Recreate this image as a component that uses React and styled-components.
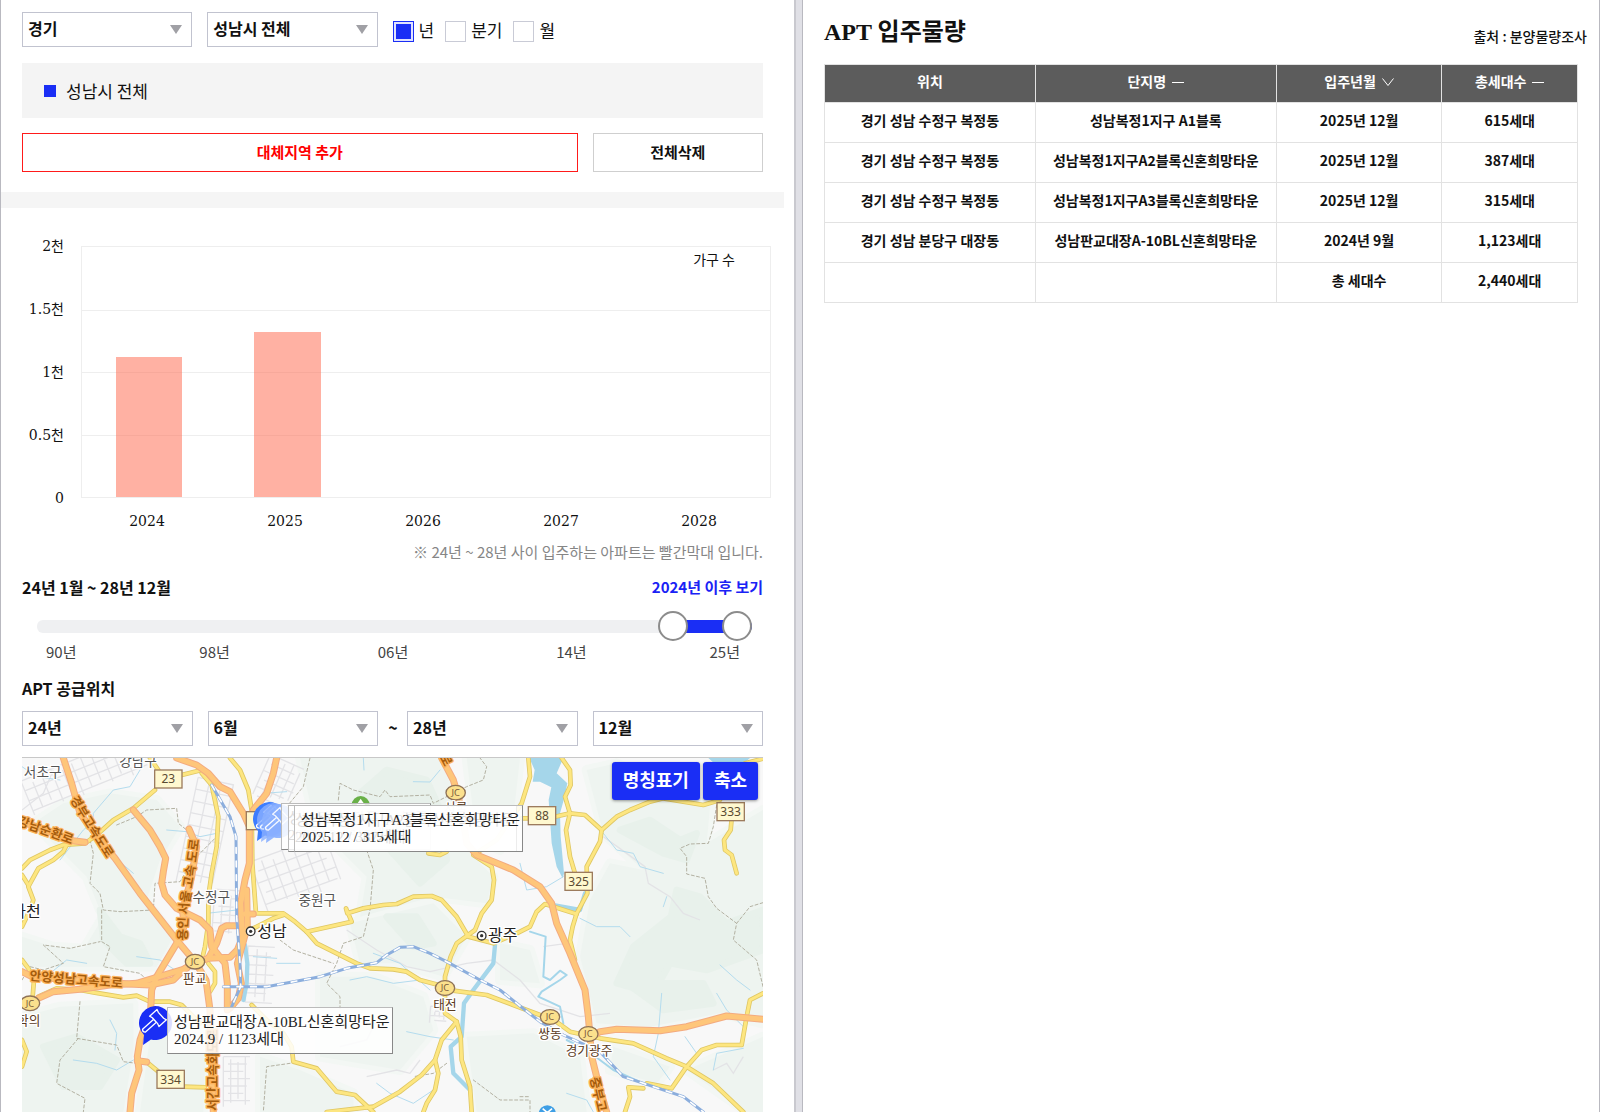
import React, { useState } from "react";
import styled, { createGlobalStyle, css } from 'styled-components';


const SANS = '"Noto Sans CJK KR", sans-serif';
const SERIF = '"Liberation Serif", "Noto Sans CJK KR", serif';

const GlobalStyle = createGlobalStyle`
  * {
    box-sizing: border-box;
  }
  body {
    margin: 0;
    background-color: #ffffff;
    color: #111111;
    font-family: ${SANS};
  }
  button, select, input {
    margin: 0;
    font-family: inherit;
    color: inherit;
  }
`;

const Page = styled.div`
  display: grid;
  grid-template-columns: calc(50% - 6px) 9px 1fr;
  min-height: 100vh;
`;

const LeftPanel = styled.main`
  display: flex;
  flex-direction: column;
  min-width: 0;
  border-left: 1px solid #b9b9c0;
`;

const Splitter = styled.div`
  background-color: #e0e0e6;
  border-left: 2px solid #c9c9cf;
  border-right: 1px solid #b9b9c0;
`;

const RightPanel = styled.section`
  min-width: 0;
  padding: 14px 21px 0 21px;
  border-right: 1px solid #b9b9c0;
`;

const Section = styled.section`
  padding: 0 31px 0 21px;
`;

const Filters = styled(Section)`
  padding-top: 12px;
`;

const MapSection = styled(Section)`
  display: flex;
  flex-direction: column;
  flex: 1;
`;

const Row = styled.div`
  display: flex;
  align-items: center;
`;

const FilterRow = styled.div`
  display: grid;
  grid-template-columns: 25% 25% 1fr;
  align-items: center;
`;

const SelectBox = styled.div`
  position: relative;
  flex: 1 1 0;
  min-width: 0;
  margin-right: ${p => (p.$last ? 0 : 15)}px;
  &::after {
    content: "";
    position: absolute;
    right: 10px;
    top: 13px;
    border: 6px solid transparent;
    border-top: 9px solid #a0a0a5;
    border-bottom: 0;
    pointer-events: none;
  }
`;

const Select = styled.select`
  appearance: none;
  display: block;
  width: 100%;
  height: 35px;
  padding: 0 24px 3px 5px;
  border: 1px solid #c1c3cf;
  border-radius: 0;
  background-color: #ffffff;
  font-size: 16px;
  font-weight: 700;
`;

const Tilde = styled.span`
  flex: 0 0 14px;
  margin-left: -7px;
  margin-right: 7px;
  padding-bottom: 3px;
  text-align: center;
  font-size: 16px;
  font-weight: 700;
`;

const Periods = styled.div`
  display: flex;
  align-items: center;
  gap: 11px;
`;

const PeriodLabel = styled.label`
  display: flex;
  align-items: flex-end;
  gap: 5px;
  font-size: 17px;
  line-height: 24px;
`;

const Check = styled.input`
  appearance: none;
  width: 21px;
  height: 21px;
  border: 1px solid #c9cbd6;
  background-color: #ffffff;
  &:checked {
    border-color: #1a2ef5;
    background-color: #1a2ef5;
    box-shadow: inset 0 0 0 2px #e0e3ff;
  }
`;

const Selected = styled.div`
  display: flex;
  align-items: center;
  gap: 10px;
  height: 55px;
  margin: 16px 0 15px;
  padding: 0 22px;
  background-color: #f4f4f4;
  font-size: 17px;
  &::before {
    content: "";
    width: 12px;
    height: 12px;
    background-color: #1a2ef5;
  }
`;

const OutlineButton = styled.button`
  flex: ${p => (p.$wide ? '1 1 0' : '0 0 23%')};
  height: 39px;
  margin-right: ${p => (p.$wide ? 15 : 0)}px;
  padding: 0 0 3px;
  border: 1px solid ${p => (p.$wide ? '#ff1a1a' : '#cfcfcf')};
  background-color: #ffffff;
  color: ${p => (p.$wide ? '#ff0000' : '#111111')};
  font-size: 15px;
  font-weight: 700;
`;

const Band = styled.div`
  flex: none;
  height: 16px;
  margin: 20px 10px 28px 0;
  background-color: #f5f5f5;
`;

const ChartWrap = styled.section`
  display: grid;
  grid-template-columns: 42px 1fr;
  column-gap: 17px;
  padding: 0 23px 0 21px;
`;

const YAxis = styled.div`
  display: flex;
  flex-direction: column;
  justify-content: space-between;
  text-align: right;
  font: 14px/20px "DejaVu Serif", "Noto Sans CJK KR", serif;
`;

const Plot = styled.div`
  position: relative;
  height: 252px;
  margin: 10px 0;
  border: 1px solid #eeeeee;
`;

const GridLines = styled.div`
  display: grid;
  grid-template-rows: repeat(4, 1fr);
  height: 100%;
`;

const GridLine = styled.div`
  border-top: 1px solid #eeeeee;
  &:first-child {
    border-top: 0;
  }
`;

const Bars = styled.div`
  position: absolute;
  inset: 0 -2px 0 -2px;
  display: grid;
  grid-template-columns: repeat(5, 1fr);
  align-items: end;
  justify-items: center;
`;

const Bar = styled.div`
  width: 48%;
  background-color: rgba(255, 99, 71, 0.5);
`;

const Legend = styled.span`
  position: absolute;
  top: 2px;
  right: 35px;
  font-size: 14px;
  line-height: 20px;
`;

const XAxis = styled.div`
  grid-column: 2;
  display: grid;
  grid-template-columns: repeat(5, 1fr);
  margin: 0 3px 0 -3px;
  text-align: center;
  font: 14px/26px "DejaVu Serif", serif;
`;

const Note = styled.p`
  margin: 6px 0 0;
  text-align: right;
  color: #868686;
  font-size: 15px;
  line-height: 24px;
`;

const RangeHead = styled.div`
  display: flex;
  justify-content: space-between;
  align-items: center;
  height: 24px;
  margin-top: 11px;
`;

const SubTitle = styled.h2`
  margin: 0;
  font-size: 16px;
  font-weight: 700;
  line-height: 24px;
`;

const BlueButton = styled.button`
  padding: 0;
  border: 0;
  background: none;
  color: #1a22f5;
  font-size: 15px;
  font-weight: 700;
  line-height: 24px;
`;

const Slider = styled.div`
  position: relative;
  display: flex;
  align-items: center;
  height: 30px;
  margin: 12px 11px 0 15px;
`;

const Track = styled.div`
  width: 100%;
  height: 13px;
  border-radius: 6px;
`;

const Thumb = styled.input`
  appearance: none;
  position: absolute;
  inset: 0;
  width: 100%;
  height: 30px;
  background: none;
  pointer-events: none;
  &::-webkit-slider-thumb {
    appearance: none;
    width: 30px;
    height: 30px;
    border: 2px solid #8c8c8c;
    border-radius: 50%;
    background-color: #ffffff;
    pointer-events: auto;
  }
`;

const Ticks = styled.div`
  display: grid;
  grid-template-columns: 4fr 9fr 9fr 9fr 4fr;
  margin: 0 11px 13px 15px;
  padding: 0 12px 0 9px;
  text-align: center;
  color: #444444;
  font-size: 15px;
  line-height: 22px;
  & > :first-child {
    text-align: left;
  }
  & > :last-child {
    text-align: right;
  }
`;

const DateRow = styled(Row)`
  margin: 11px 0;
`;

const MapBox = styled.div`
  position: relative;
  flex: 1 0 340px;
  overflow: hidden;
  border-top: 1px solid #c8c8c8;
`;

const MapSvg = styled.svg`
  position: absolute;
  inset: 0;
  width: 100%;
  height: 100%;
`;

const MapButtons = styled.div`
  position: absolute;
  top: 4px;
  right: 5px;
  display: flex;
  gap: 3px;
`;

const MapButton = styled.button`
  height: 38px;
  padding: 0 11px 4px;
  border: 0;
  border-radius: 3px;
  background-color: #1a2ef5;
  box-shadow: 0 1px 3px rgba(0, 0, 0, 0.4);
  color: #ffffff;
  font-size: 18px;
  font-weight: 700;
`;

const Popup = styled.div`
  position: absolute;
  left: ${p => p.$x}px;
  top: ${p => p.$y}px;
  padding: 6px 2px 5px 6px;
  border: 1px solid #999999;
  border-color: #bbbbbb #888888 #888888 #bbbbbb;
  background-color: rgba(255, 255, 255, 0.84);
  color: #222222;
  font-family: ${SERIF};
  font-size: 15px;
  line-height: 17px;
  white-space: nowrap;
`;

const Pin = styled.svg`
  position: absolute;
  left: ${p => p.$x}px;
  top: ${p => p.$y}px;
  width: 36px;
  height: 42px;
`;

const mapText = css`
  font-family: ${SANS};
  text-anchor: middle;
  paint-order: stroke;
  stroke-linejoin: round;
`;

const Place = styled.text`
  ${mapText}
  fill: ${p => (p.$city ? '#222222' : p.$jc ? '#5a3a22' : '#555555')};
  stroke: #ffffff;
  stroke-width: 8px;
  font-size: ${p => (p.$city ? 48 : p.$jc ? 38 : 41)}px;
  font-weight: 400;
`;

const RoadName = styled.text`
  font-family: ${SANS};
  font-size: 38px;
  font-weight: 700;
  fill: #a55c0c;
  stroke: #fdb45e;
  stroke-width: 8px;
  stroke-linejoin: round;
  paint-order: stroke;
`;

const Shield = styled.text`
  font-family: "Noto Sans", sans-serif;
  font-size: 36px;
  text-anchor: middle;
  fill: #5a4a32;
`;

const JcText = styled.text`
  font-family: "Noto Sans", sans-serif;
  font-size: 28px;
  text-anchor: middle;
  fill: #7a5a3a;
`;

const TitleRow = styled.header`
  display: flex;
  justify-content: space-between;
  align-items: flex-end;
  height: 36px;
  margin: 0 -9px 14px 0;
`;

const Title = styled.h1`
  margin: 0;
  font-family: ${SERIF};
  font-size: 24px;
  font-weight: 700;
  line-height: 36px;
`;

const Source = styled.span`
  font-size: 14px;
  font-weight: 500;
  line-height: 28px;
`;

const Table = styled.table`
  width: 100%;
  border-collapse: collapse;
  table-layout: fixed;
  text-align: center;
  font-size: 14px;
`;

const cell = css`
  padding: 0 0 5px;
  border: 1px solid #e2e2e2;
  font-weight: 700;
`;

const Th = styled.th`
  ${cell}
  width: ${p => p.$w}%;
  height: 38px;
  background-color: #5c5c5c;
  color: #ffffff;
`;

const Td = styled.td`
  ${cell}
  height: 40px;
`;

const SortButton = styled.button`
  display: inline-flex;
  align-items: center;
  gap: 6px;
  padding: 0;
  border: 0;
  background: none;
  color: inherit;
  font-size: 14px;
  font-weight: 700;
`;

const SortIcon = styled.svg`
  width: 12px;
  height: 12px;
  fill: none;
  stroke: currentColor;
`;


const chartData = [
    { year: 2024, count: 1123 },
    { year: 2025, count: 1317 },
    { year: 2026, count: 0 },
    { year: 2027, count: 0 },
    { year: 2028, count: 0 },
];

const rows = [
    ['경기 성남 수정구 복정동', '성남복정1지구 A1블록', '2025년 12월', '615세대'],
    ['경기 성남 수정구 복정동', '성남복정1지구A2블록신혼희망타운', '2025년 12월', '387세대'],
    ['경기 성남 수정구 복정동', '성남복정1지구A3블록신혼희망타운', '2025년 12월', '315세대'],
    ['경기 성남 분당구 대장동', '성남판교대장A-10BL신혼희망타운', '2024년 9월', '1,123세대'],
    ['', '', '총 세대수', '2,440세대'],
];

const green = [
    'M100 220L190 160L330 130L470 150L540 230L480 330L440 450L300 480L260 380L180 300Z',
    'M300 300L390 360L450 470L520 560L470 650L340 650L250 600L310 500L270 400Z',
    'M66 560L160 590L310 600L400 650L66 650Z',
    'M66 800L180 770L400 760L400 900L370 1086L66 1086Z',
    'M450 860L620 820L610 1086L420 1086Z',
    'M900 24L1320 24L1370 140L1390 290L1480 380L1460 460L1300 440L1080 500L1100 380L1020 300L940 200Z',
    'M1050 520L1300 460L1400 560L1330 680L1200 640L1080 640Z',
    'M960 680L1120 680L1270 740L1300 840L1200 960L960 920Z',
    'M780 920L900 960L1060 1030L1060 1086L780 1086Z',
    'M1400 24L1560 24L1540 200L1500 300L1430 270Z',
    'M1500 580L1590 600L1620 700L1500 690Z',
    'M1400 860L1600 850L1740 920L1760 1086L1430 1086Z',
    'M1760 60L1850 40L2130 170L2120 280L2289 180L2289 820L2160 790L1950 830L1790 820L1740 620L1770 450L1830 340L1930 360L1810 250Z',
    'M1840 890L2010 950L1970 1000L1830 960Z',
    'M2060 960L2289 860L2289 1086L2240 1086Z',
];

const darkGreen = [
    'M300 480L360 560L420 580L450 640L380 640L310 570Z',
    'M130 890L230 860L350 930L300 1010L190 1010Z',
    'M1080 130L1160 60L1280 90L1330 200L1340 330L1260 400L1170 300Z',
    'M1160 500L1250 500L1300 580L1240 590Z',
    'M1860 240L1950 210L2040 270L2090 250L2060 330L1990 310Z',
    'M1900 590L2013 500L2030 420L2100 440L2180 520L2289 480L2289 600L2120 660L2010 640L1960 730L1850 700Z',
    'M1990 780L1880 700L2110 700L2140 760Z',
];

const highways = [
    'M190 24L215 100L240 190L300 270L345 325L420 430L530 570L585 635L618 690L630 780L640 1086',
    'M400 180L450 240L480 290L497 325L490 365L485 400L495 435L530 475L600 510L630 540L635 590L675 640L682 700L682 780',
    'M567 237L590 290L575 380L548 480L552 530L530 580L470 680L455 720L452 780L420 870L412 920L417 960L395 1030L390 1086',
    'M412 932L440 936',
    'M530 24L590 45L625 70L660 110L690 125L730 190L748 230',
    'M830 24L820 70L800 130L760 180L748 240L748 340L735 390L722 460L728 560L712 600L690 622L625 625L585 640',
    'M740 420L742 530L712 640L724 700L715 745L690 775',
    'M66 665L100 682L230 690L385 702L450 705L520 690L555 655L585 638',
    'M115 745L160 725L240 718L330 705L410 700L470 682L560 655',
    'M66 215L150 245L220 272L255 277',
    'M625 625L650 580L665 535L680 527L706 527',
    'M735 492L760 492',
    'M1325 24L1360 90L1375 140L1390 210L1400 280L1430 315L1480 335L1540 360L1620 410L1655 460L1670 520L1710 610L1755 720L1765 800L1770 860L1775 920L1795 1000L1820 1086',
    'M1770 862L1800 845L1850 838L1980 842L2060 830L2180 798L2289 808',
];

const yellowRoads = [
    'M66 355L90 330L150 300L190 285L255 280L290 255L340 210L400 175L465 120',
    'M66 530L90 480L100 450L85 410L115 355L160 330L190 305L200 285',
    'M85 405L66 375',
    'M545 75L605 60',
    'M605 70L635 105L655 200L650 290L635 370L625 440L625 520L615 590L608 620',
    'M450 24L475 60',
    'M690 24L720 60L745 120L755 180L757 340L768 490L850 490L885 515L920 545L950 580L980 595L1070 640L1110 655L1180 658L1220 665L1260 690L1305 702L1360 722L1460 735L1540 765L1620 795L1655 805L1710 845L1800 865L1900 880L2000 925L2060 950L2140 1000L2230 1086',
    'M760 535L820 505L850 495',
    'M920 545L1055 515L1038 475L1042 490L1090 475L1150 465L1190 462L1240 440L1295 438L1325 450L1370 500L1405 560L1480 580L1550 550L1590 530L1610 485L1635 462L1730 492',
    'M1585 24L1590 80L1565 160L1490 270L1420 315L1475 350L1482 390L1475 450L1445 490L1425 540L1370 580L1352 620L1335 680L1335 790L1370 815L1325 870L1305 930L1265 975L1200 1025L1120 1070L980 1086',
    'M1370 815L1382 860L1385 930L1410 1010L1415 1086',
    'M1305 930L1315 970L1305 1020L1280 1060L1270 1086',
    'M755 765L800 810L850 850L875 890L880 935L950 955L1010 1025L1065 1035L1120 1086',
    'M1285 310L1320 315L1340 305',
    'M115 740L170 715L240 720L285 728L370 742L410 737L450 755L510 755L545 765L600 820',
    'M66 630L85 655L102 690L98 740',
    'M66 870L80 905L66 950',
    'M625 640L645 665L645 700L630 725',
    'M445 940L475 965M550 1010L615 1012',
    'M1565 205L1590 205M1665 200L1710 190L1755 195L1805 240L1850 200L1890 180L1950 155L1990 145L2110 165L2160 150',
    'M1685 24L1710 60L1712 105L1695 140L1710 190L1698 240L1710 320L1725 370',
    'M1805 240L1800 275L1760 350L1762 430L1730 490L1718 530L1710 570L1725 630',
    'M2195 205L2192 240L2172 270L2175 300L2195 315L2210 370',
    'M2235 40L2289 26',
    'M2289 730L2250 750L2240 800L2225 885L2150 885L2105 900L2060 950L2015 1015L1940 1000',
    'M1930 1015L1885 1012L1890 1040L1875 1086',
];

const rails = [
    'M635 105L690 200L708 260L710 500L720 640L722 710L695 770',
    'M670 710L800 710L960 680L1040 655L1130 638L1160 615L1200 592L1240 590L1290 610L1340 635L1440 690L1500 720L1560 768L1620 815L1690 855L1800 905L1870 980L1960 1010L2050 1040L2110 1086',
];

const rivers = [
    'M1485 585L1480 640L1420 720L1392 760L1385 860L1352 890L1360 970L1410 1020',
    'M735 585L742 640L740 700L730 750',
    'M1755 430L1740 480L1640 462',
];

const streams = [
    'M66 50L110 80L180 90M420 60L390 110L340 120L280 190L280 215L250 240L180 330',
    'M270 230L330 310L400 370M500 240L560 245L600 260L650 250',
    'M150 670L200 630L260 640M220 930L290 940L350 960L400 930M330 810L350 850L345 900',
    'M620 490L710 480M410 620L480 630L540 670M580 440L600 430',
    'M1050 690L1100 680L1180 700L1260 690M1120 610L1200 640L1290 720',
    'M1220 845L1290 860L1360 870M1130 1000L1170 1030L1240 1060L1300 1020',
    'M1560 340L1580 420L1640 410L1690 380',
    'M1810 250L1850 300L1900 310L1920 350L1990 370M2000 440L1990 470M1740 505L1790 530L1860 530L1890 560',
    'M2160 645L2210 690L2250 720M2150 730L2180 780L2230 830M1985 730L1975 850L1960 920L2010 990M2055 860L2090 910L2060 960',
    'M1700 1030L1760 1050L1780 1086M2140 960L2150 910L2230 895',
    'M830 640L900 640M760 620L830 625M1090 24L1092 60M1240 95L1290 96L1320 60M790 130L860 125',
];

const creeks = [
    'M1590 545L1637 560L1630 680L1650 690L1680 662L1700 675L1680 690L1625 725L1615 740L1680 770L1690 820',
    'M1700 870L1760 900L1840 960L1930 1000',
];

const borders = [
    'M350 225L410 200L440 180L530 175L535 220L560 240',
    'M270 270L280 310L270 400L300 430L310 480L360 485L460 480L465 400L540 395L580 330L650 260',
    'M305 480L305 575L330 590L310 650L420 670L440 690',
    'M66 690L90 650L130 660L190 640L130 585L210 595L300 575',
    'M240 755L230 865L350 885L370 935L410 940M235 865L180 930L170 1000L255 1045L250 1086',
    'M930 24L910 110L860 170M1015 150L1020 100L1060 120L1140 140L1155 120L1170 140L1290 135L1300 160L1400 110L1450 90L1460 50L1440 24',
    'M1100 300L1120 360L1110 480L1090 560L1030 580L1010 640L980 700L1020 740L1020 775',
    'M840 570L880 600L1000 640M870 940L800 950L790 1086',
    'M2150 165L2140 230L2125 280L2070 282L2040 295L2060 320L2060 372L2115 385L2125 440L2150 475L2210 520L2200 570L2270 630L2289 710M2210 520L2250 470L2289 458',
    'M1340 940L1300 970L1240 980M1420 990L1500 1050L1590 1050L1590 1086M1560 1040L1590 1040',
];

// blocks of side streets: x, y, width, height, spacing, angle
const blocks = [
    [70, 20, 370, 110, 32, -22],
    [560, 90, 110, 320, 36, 12],
    [770, 290, 240, 160, 34, -20],
    [640, 420, 80, 130, 25, 4],
    [740, 590, 80, 170, 28, 3],
    [780, 30, 110, 130, 26, 24],
    [670, 920, 80, 150, 22, 0],
    [1290, 770, 50, 50, 14, 4],
];

const streets = ([x, y, w, h, step]) => {
    let d = '';
    for (let i = 0; i <= w; i += step) d += `M${x + i} ${y + (i % 3) * 8}V${y + h - (i % 5) * 6}`;
    for (let i = 0; i <= h; i += step) d += `M${x + (i % 4) * 7} ${y + i}H${x + w - (i % 3) * 10}`;
    return d;
};

const shields = [
    [505, 87, '23'],
    [780, 212, '3'],
    [1626, 197, '88'],
    [1736, 394, '325'],
    [2192, 185, '333'],
    [512, 988, '334'],
];

const junctions = [[585, 635], [90, 760], [1367, 128], [1335, 714], [1650, 801], [1765, 852]];

const Lines = ({ paths, ...rest }) => (
    <g fill="none" strokeLinecap="round" strokeLinejoin="round" {...rest}>
        {paths.map(d => <path key={d} d={d} />)}
    </g>
);

const MapDrawing = () => (
    <MapSvg viewBox="66 24 2223 1062" preserveAspectRatio="xMidYMid slice" role="img" aria-label="APT 공급위치 지도">
        <defs>
            <path id="gyeongbu" d="M209 148L250 215L326 335" />
            <path id="gangnam" d="M50 224L130 252L240 292" />
            <path id="yongin" d="M560 572L566 470L582 380L604 225" />
            <path id="anyang" d="M88 690L230 702L400 716" />
            <path id="seogan" d="M652 1082L652 780" />
            <path id="jungbu" d="M1770 985L1805 1130" />
            <path id="jungbuTop" d="M1318 20L1360 100" />
        </defs>
        <rect x="66" y="24" width="2223" height="1062" fill="#f8f8f8" />
        <g fill="#f3f7f4" stroke="#f3f7f4" strokeWidth="30" strokeLinejoin="round">{green.map(d => <path key={d} d={d} />)}</g>
        <g fill="#eef4f0">{green.map(d => <path key={d} d={d} />)}</g>
        <g fill="#e8f1eb" stroke="#e8f1eb" strokeWidth="20" strokeLinejoin="round">{darkGreen.map(d => <path key={d} d={d} />)}</g>
        <g fill="none" stroke="#e3e3e6" strokeWidth="4">
            {blocks.map(b => (
                <path key={b[0]} d={streets(b)} transform={`rotate(${b[5]} ${b[0] + b[2] / 2} ${b[1] + b[3] / 2})`} />
            ))}
            <path d="M1040 540L1130 600L1220 650L1290 665L1400 640L1480 630L1560 690L1620 760L1740 800L1830 790" />
            <path d="M1810 260L1880 310L1935 350L1945 400L2010 440L2050 490L2100 510M1630 590L1700 580M2140 960L2180 940L2200 970L2230 920" />
            <path d="M1260 930L1230 970L1190 960L1100 980M1120 830L1100 870L1020 890M66 180L130 130L160 60" />
        </g>
        <path d="M1588 24L1690 24L1670 70L1702 100L1694 140L1680 190L1682 260L1692 370L1688 385L1670 350L1655 280L1646 150L1654 112L1620 95L1598 95L1604 60ZM2125 24L2250 24L2210 60L2160 55Z" fill="#a5d6ea" />
        <Lines paths={rivers} stroke="#a5d6ea" strokeWidth="13" />
        <Lines paths={creeks} stroke="#a5d6ea" strokeWidth="6" />
        <Lines paths={streams} stroke="#b4dcee" strokeWidth="3" />
        <Lines paths={borders} stroke="#b3b1a2" strokeWidth="3" strokeDasharray="9 7" />
        <Lines paths={yellowRoads} stroke="#dfc764" strokeWidth="14" />
        <Lines paths={yellowRoads} stroke="#fde680" strokeWidth="9" />
        <Lines paths={highways} stroke="#f3ab80" strokeWidth="21" />
        <Lines paths={highways} stroke="#fec67a" strokeWidth="15" />
        <Lines paths={rails} stroke="#8caedd" strokeWidth="9" />
        <Lines paths={rails} stroke="#ffffff" strokeWidth="5" strokeDasharray="17 24" />

        <circle cx="1082" cy="165" r="27" fill="#69b048" />
        <path d="M1082 146L1097 168H1067Z" fill="#ffffff" />
        <circle cx="1642" cy="1092" r="26" fill="#3f9fe5" />
        <path d="M1628 1076L1656 1100M1656 1076L1628 1100" stroke="#ffffff" strokeWidth="5" />

        <RoadName><textPath href="#gyeongbu">경부고속도로</textPath></RoadName>
        <RoadName><textPath href="#gangnam">강남순환로</textPath></RoadName>
        <RoadName><textPath href="#yongin">용인 서울 고속 도로</textPath></RoadName>
        <RoadName><textPath href="#anyang">안양성남고속도로</textPath></RoadName>
        <RoadName><textPath href="#seogan">서간고속화도로</textPath></RoadName>
        <RoadName><textPath href="#jungbu">중부고</textPath></RoadName>
        <RoadName><textPath href="#jungbuTop">로</textPath></RoadName>

        {shields.map(([x, y, label]) => (
            <g key={label}>
                <rect x={x - 41} y={y - 27} width="82" height="54" fill="#fff8cf" stroke="#9c7b5e" strokeWidth="4" />
                <Shield x={x} y={y + 13}>{label}</Shield>
            </g>
        ))}
        {junctions.map(([x, y]) => (
            <g key={x}>
                <ellipse cx={x} cy={y} rx="29" ry="22" fill="#fbe08d" stroke="#8f7256" strokeWidth="4" />
                <JcText x={x} y={y + 10}>JC</JcText>
            </g>
        ))}

        <Place x="128" y="80">서초구</Place>
        <Place x="414" y="48">강남구</Place>
        <Place x="634" y="455">수정구</Place>
        <Place x="952" y="466">중원구</Place>
        <Place $city x="78" y="500">과천</Place>
        <Place $city x="816" y="561">성남</Place>
        <Place $city x="1508" y="574">광주</Place>
        <Place $jc x="584" y="700">판교</Place>
        <Place $jc x="86" y="824">학의</Place>
        <Place $jc x="1367" y="185">서쿨</Place>
        <Place $jc x="1335" y="777">태전</Place>
        <Place $jc x="1650" y="864">쌍동</Place>
        <Place $jc x="1767" y="914">경기광주</Place>
        {[[752, 544], [1445, 557]].map(([x, y]) => (
            <g key={x}>
                <circle cx={x} cy={y} r="13" fill="#ffffff" stroke="#333333" strokeWidth="4" />
                <circle cx={x} cy={y} r="5" fill="#333333" />
            </g>
        ))}
    </MapSvg>
);

const MapPin = ({ x, y, color, opacity = 1 }) => (
    <Pin $x={x} $y={y} viewBox="0 0 36 42" opacity={opacity} aria-hidden="true">
        <path d="M18 1a17 17 0 1 1-4 33.500L6 40l1-10A17 17 0 0 1 18 1z" fill={color} />
        <g transform="translate(21 13) rotate(48)" fill={color} stroke="#ffffff" strokeWidth="1.3" strokeLinejoin="round">
            <path d="M-2 4H2V19Q0 21 -2 19Z" />
            <path d="M-7 -5L-4 -4H4L7 -5V5L4 4H-4L-7 5Z" />
        </g>
    </Pin>
);

const Dropdown = ({ label, value, last }) => (
    <SelectBox $last={last}>
        <Select aria-label={label} defaultValue={value}>
            <option>{value}</option>
        </Select>
    </SelectBox>
);

const Supply = () => {
    const [period, setPeriod] = useState('년');
    const [from, setFrom] = useState(68);
    const [to, setTo] = useState(75);
    const start = (from / 75) * 100;
    const end = (to / 75) * 100;

    return (
        <LeftPanel>
            <Filters>
                <FilterRow>
                    <Dropdown label="시도" value="경기" />
                    <Dropdown label="시군구" value="성남시 전체" />
                    <Periods>
                        {['년', '분기', '월'].map(p => (
                            <PeriodLabel key={p}>
                                <Check type="checkbox" checked={period === p} onChange={() => setPeriod(p)} />
                                {p}
                            </PeriodLabel>
                        ))}
                    </Periods>
                </FilterRow>
                <Selected>성남시 전체</Selected>
                <Row>
                    <OutlineButton type="button" $wide>대체지역 추가</OutlineButton>
                    <OutlineButton type="button">전체삭제</OutlineButton>
                </Row>
            </Filters>
            <Band />
            <ChartWrap>
                <YAxis>
                    {['2천', '1.5천', '1천', '0.5천', '0'].map(t => <span key={t}>{t}</span>)}
                </YAxis>
                <Plot>
                    <GridLines>
                        <GridLine /><GridLine /><GridLine /><GridLine />
                    </GridLines>
                    <Bars>
                        {chartData.map(d => <Bar key={d.year} style={{ height: `${d.count / 20}%` }} />)}
                    </Bars>
                    <Legend>가구 수</Legend>
                </Plot>
                <XAxis>
                    {chartData.map(d => <span key={d.year}>{d.year}</span>)}
                </XAxis>
            </ChartWrap>
            <Section>
                <Note>※ 24년 ~ 28년 사이 입주하는 아파트는 빨간막대 입니다.</Note>
                <RangeHead>
                    <SubTitle>24년 1월 ~ 28년 12월</SubTitle>
                    <BlueButton type="button">2024년 이후 보기</BlueButton>
                </RangeHead>
                <Slider>
                    <Track style={{ background: `linear-gradient(to right, #eff0f2 ${start}%, #1a2ef5 ${start}% ${end}%, #eff0f2 ${end}%)` }} />
                    <Thumb type="range" aria-label="시작" min="0" max="75" value={from} onChange={e => setFrom(Math.min(+e.target.value, to))} />
                    <Thumb type="range" aria-label="끝" min="0" max="75" value={to} onChange={e => setTo(Math.max(+e.target.value, from))} />
                </Slider>
                <Ticks>
                    {['90년', '98년', '06년', '14년', '25년'].map(t => <span key={t}>{t}</span>)}
                </Ticks>
            </Section>
            <MapSection>
                <SubTitle>APT 공급위치</SubTitle>
                <DateRow>
                    <Dropdown label="시작 연도" value="24년" />
                    <Dropdown label="시작 월" value="6월" />
                    <Tilde>~</Tilde>
                    <Dropdown label="종료 연도" value="28년" />
                    <Dropdown label="종료 월" value="12월" last />
                </DateRow>
                <MapBox>
                    <MapDrawing />
                    <MapPin x={229} y={43} color="#3c7dff" />
                    <MapPin x={233} y={44} color="#8ab0ff" opacity={0.8} />
                    <MapPin x={238} y={45} color="#8ab0ff" opacity={0.9} />
                    <MapPin x={115} y={247} color="#1a2ef5" />
                    <Popup $x={259} $y={45}>성남복정1지구 A1블록<br />2025.12 / 615세대</Popup>
                    <Popup $x={266} $y={47}>성남복정1지구A2블록신혼희망타운<br />2025.12 / 387세대</Popup>
                    <Popup $x={272} $y={47}>성남복정1지구A3블록신혼희망타운<br />2025.12 / 315세대</Popup>
                    <Popup $x={145} $y={249}>성남판교대장A-10BL신혼희망타운<br />2024.9 / 1123세대</Popup>
                    <MapButtons>
                        <MapButton type="button">명칭표기</MapButton>
                        <MapButton type="button">축소</MapButton>
                    </MapButtons>
                </MapBox>
            </MapSection>
        </LeftPanel>
    );
};

const MoveIn = () => (
    <RightPanel>
        <TitleRow>
            <Title>APT 입주물량</Title>
            <Source>출처 : 분양물량조사</Source>
        </TitleRow>
        <Table>
            <thead>
                <tr>
                    <Th $w={28}>위치</Th>
                    <Th $w={32}>
                        <SortButton type="button">단지명<SortIcon viewBox="0 0 12 12"><path d="M0 7.500H12" /></SortIcon></SortButton>
                    </Th>
                    <Th $w={22}>
                        <SortButton type="button">입주년월<SortIcon viewBox="0 0 12 12"><path d="M0.500 3.500L6 10.500L11.500 3.500" /></SortIcon></SortButton>
                    </Th>
                    <Th $w={18}>
                        <SortButton type="button">총세대수<SortIcon viewBox="0 0 12 12"><path d="M0 7.500H12" /></SortIcon></SortButton>
                    </Th>
                </tr>
            </thead>
            <tbody>
                {rows.map((row, i) => (
                    <tr key={i}>
                        {row.map((text, j) => <Td key={j}>{text}</Td>)}
                    </tr>
                ))}
            </tbody>
        </Table>
    </RightPanel>
);

const App = () => {

    return (
        <>
            <GlobalStyle />
            <Page>
                <Supply />
                <Splitter />
                <MoveIn />
            </Page>
        </>
    )
};

export default App
